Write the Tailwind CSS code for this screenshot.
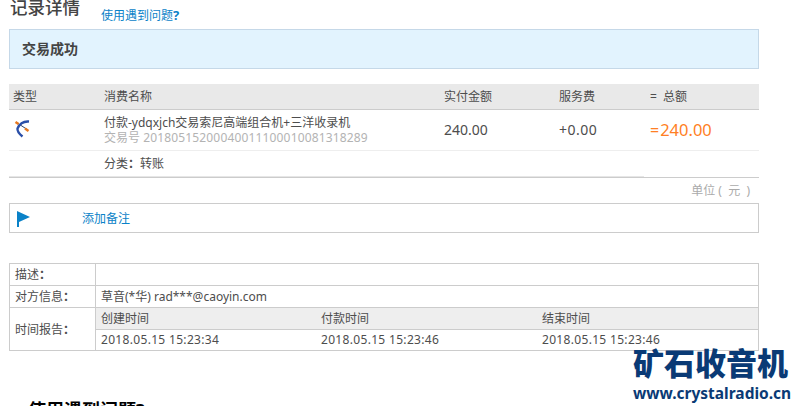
<!DOCTYPE html>
<html lang="zh-CN">
<head>
    <meta charset="UTF-8">
    <title>记录详情</title>
    <script src="https://cdn.jsdelivr.net/npm/@tailwindcss/browser@4"></script>
</head>
<body class="bg-white">
    <div class="relative w-[798px] h-[406px] overflow-hidden font-['Noto_Sans','Noto_Sans_CJK_SC',sans-serif] text-xs text-[#4d4d4d]">
        <div class="w-[750px] ml-[9px]">

            <!-- Title -->
            <div class="flex h-[29px]">
                <h1 class="w-[92px] -mt-[6px] h-[26px] pl-px leading-[26px] text-[17.5px] font-medium text-[#444]">记录详情</h1>
                <a class="mt-[6px] h-[18px] leading-[18px] text-[#0a82c8]">使用遇到问题<span class="text-[13px] font-bold">?</span></a>
            </div>

            <!-- Status -->
            <div class="h-10 border border-[#c5d8e8] bg-[#e2f3fe] pl-3 leading-[38px] text-sm font-bold text-[#444]">交易成功</div>

            <!-- Record -->
            <div class="mt-[15px] flex h-[26px] items-center border-b border-[#ccc] bg-[#e9e9e9]">
                <div class="w-[95px] pl-1">类型</div>
                <div class="w-[340px]">消费名称</div>
                <div class="w-[115px]">实付金额</div>
                <div class="w-[91px]">服务费</div>
                <div>=&nbsp;&nbsp;总额</div>
            </div>
            <div class="flex h-[41px] items-center border-b border-[#eee]">
                <div class="w-[95px] pl-[5px]">
                    <svg width="20" height="20" viewBox="0 0 20 20" class="-mt-[3px]">
                        <path d="M2.5 3.5 L14 11" stroke="#33425f" stroke-width="1" fill="none"/>
                        <path d="M15 2.5 C9.5 2 5.5 5 3.5 9.5 C3 12.5 5.5 15 8.5 17.5" stroke="#2a4fa8" stroke-width="2.4" fill="none"/>
                        <path d="M1.5 3 L4.5 5" stroke="#e8791e" stroke-width="2.4" fill="none"/>
                        <path d="M11 9.5 L14.5 12" stroke="#e8791e" stroke-width="2.4" fill="none"/>
                    </svg>
                </div>
                <div class="w-[340px] leading-[15px]">
                    <div>付款-ydqxjch交易索尼高端组合机+三洋收录机</div>
                    <div class="text-[#b3b3b3]">交易号 <span class="tracking-[0.16px]">20180515200040011100010081318289</span></div>
                </div>
                <div class="w-[115px] text-sm">240.00</div>
                <div class="w-[91px] text-sm tracking-[0.5px]">+0.00</div>
                <div class="text-[#ff7f24] text-[16.5px] leading-5"><span class="mr-px text-base">=</span>240.00</div>
            </div>
            <div class="flex h-[25px] items-center">
                <div class="w-[95px]"></div>
                <div>分类<span class="font-['Noto_Sans_CJK_TC'] font-bold">：</span>转账</div>
            </div>
            <div class="h-px w-[635px] bg-[#e6e6e6]"></div>
            <div class="h-px bg-[#ccc]"></div>
            <div class="h-[25px] pr-[9px] text-right leading-[25px] text-[#aaa]">单位&nbsp;(&nbsp;&nbsp;元&nbsp;&nbsp;)</div>

            <!-- Note -->
            <div class="flex h-[30px] items-center border border-[#ccc]">
                <div class="w-[72px] pl-[7px]">
                    <svg width="14" height="16" viewBox="0 0 14 16" class="mt-[2px]">
                        <path d="M0 0 L13 6 L2 11 L2 16 L0 16 Z" fill="#0a82c8"/>
                    </svg>
                </div>
                <a class="mt-[2px] text-[#0a82c8]">添加备注</a>
            </div>

            <!-- Details -->
            <table class="mt-[30px] w-[750px] table-fixed border-collapse border border-[#ccc]">
                <tbody>
                    <tr class="h-[22px]">
                        <td class="w-[86px] border border-[#ccc] pl-[5px]">描述<span class="font-['Noto_Sans_CJK_TC'] font-bold">：</span></td>
                        <td class="border border-[#ccc]"></td>
                    </tr>
                    <tr class="h-[22px]">
                        <td class="border border-[#ccc] pl-[5px]">对方信息<span class="font-['Noto_Sans_CJK_TC'] font-bold">：</span></td>
                        <td class="border border-[#ccc] pl-[5px]">草音(*华) rad***@caoyin.com</td>
                    </tr>
                    <tr>
                        <td class="border border-[#ccc] pl-[5px]">时间报告<span class="font-['Noto_Sans_CJK_TC'] font-bold">：</span></td>
                        <td class="border border-[#ccc] p-0">
                            <div class="grid h-[22px] grid-cols-[220px_221px_1fr] items-center border-b border-[#ccc] bg-[#eee] pl-[5px]">
                                <div>创建时间</div>
                                <div>付款时间</div>
                                <div>结束时间</div>
                            </div>
                            <div class="grid h-5 grid-cols-[220px_221px_1fr] items-center pl-[5px] tracking-[0.32px]">
                                <div>2018.05.15 15:23:34</div>
                                <div>2018.05.15 15:23:46</div>
                                <div>2018.05.15 15:23:46</div>
                            </div>
                        </td>
                    </tr>
                </tbody>
            </table>

            <h2 class="mt-[47px] ml-[19px] text-lg leading-6 font-bold text-black">使用遇到问题?</h2>
        </div>

        <!-- Watermark -->
        <div class="absolute left-[633px] top-[345px] w-[165px] text-[#0a3a75]">
            <div class="text-[31px] leading-[36px] font-black whitespace-nowrap">矿石收音机</div>
            <div class="mt-[2px] text-[15.5px] leading-5 font-bold whitespace-nowrap">www.crystalradio.cn</div>
        </div>
    </div>
</body>
</html>
